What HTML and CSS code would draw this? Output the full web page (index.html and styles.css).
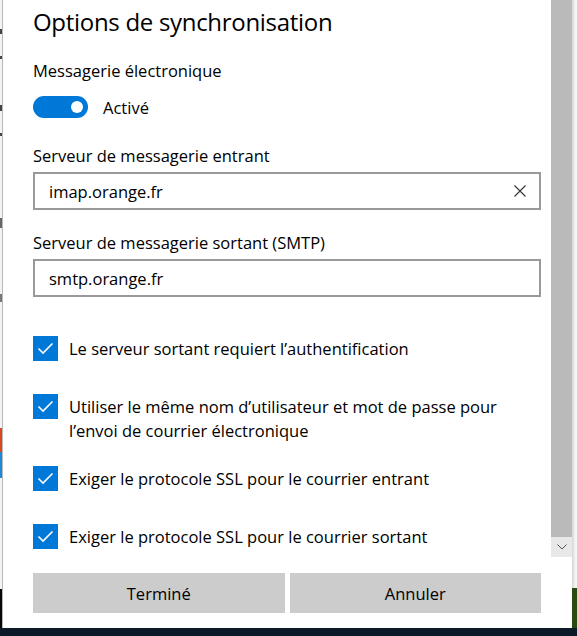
FILE: index.html
```html
<!DOCTYPE html>
<html lang="fr">
<head>
<meta charset="utf-8">
<title>Options de synchronisation</title>
<link rel="stylesheet" href="styles.css">
</head>
<body>
<div class="screen">
  <div class="behind-left">
    <div class="bl-top">
      <span class="mark mark-a"></span>
      <span class="mark mark-b"></span>
      <span class="mark mark-c"></span>
      <span class="mark mark-d"></span>
      <span class="mark mark-e"></span>
      <span class="mark mark-f"></span>
    </div>
    <div class="bl-orange"></div>
    <div class="bl-blue"></div>
    <div class="bl-fill"></div>
    <div class="bl-black"></div>
  </div>

  <section class="dialog">
    <div class="content">
      <h1 class="title">Options de synchronisation</h1>

      <div class="label label-first">Messagerie électronique</div>
      <div class="toggle-row">
        <span class="toggle"><span class="knob"></span></span>
        <span class="toggle-text">Activé</span>
      </div>

      <div class="label label-field">Serveur de messagerie entrant</div>
      <div class="field">
        <span class="field-value">imap.orange.fr</span>
        <svg class="clear" width="12" height="12" viewBox="0 0 12 12" aria-hidden="true">
          <path d="M0.5 0.5 L11.5 11.5 M11.5 0.5 L0.5 11.5" stroke="#333" stroke-width="1.1" fill="none"/>
        </svg>
      </div>

      <div class="label label-field2">Serveur de messagerie sortant (SMTP)</div>
      <div class="field">
        <span class="field-value">smtp.orange.fr</span>
      </div>

      <div class="checks">
        <div class="check">
          <span class="box"><svg width="25" height="25" viewBox="0 0 25 25"><path d="M5.5 12.5 L10 17 L19.5 7.5" stroke="#fff" stroke-width="1.6" fill="none"/></svg></span>
          <span class="check-text">Le serveur sortant requiert l’authentification</span>
        </div>
        <div class="check check-multi">
          <span class="box"><svg width="25" height="25" viewBox="0 0 25 25"><path d="M5.5 12.5 L10 17 L19.5 7.5" stroke="#fff" stroke-width="1.6" fill="none"/></svg></span>
          <span class="check-text">Utiliser le même nom d’utilisateur et mot de passe pour l’envoi de courrier électronique</span>
        </div>
        <div class="check">
          <span class="box"><svg width="25" height="25" viewBox="0 0 25 25"><path d="M5.5 12.5 L10 17 L19.5 7.5" stroke="#fff" stroke-width="1.6" fill="none"/></svg></span>
          <span class="check-text">Exiger le protocole SSL pour le courrier entrant</span>
        </div>
        <div class="check">
          <span class="box"><svg width="25" height="25" viewBox="0 0 25 25"><path d="M5.5 12.5 L10 17 L19.5 7.5" stroke="#fff" stroke-width="1.6" fill="none"/></svg></span>
          <span class="check-text">Exiger le protocole SSL pour le courrier sortant</span>
        </div>
      </div>

      <div class="buttons">
        <button class="btn">Terminé</button>
        <button class="btn">Annuler</button>
      </div>
    </div>
    <div class="scrollbar">
      <div class="thumb"></div>
      <div class="arrow">
        <svg width="10" height="6" viewBox="0 0 10 6"><path d="M0.5 0.5 L5 5 L9.5 0.5" stroke="#555" stroke-width="1" fill="none"/></svg>
      </div>
      <div class="track-rest"></div>
    </div>
  </section>

  <div class="behind-right">
    <div class="br-top"></div>
    <div class="br-green"></div>
  </div>

  <div class="taskbar"></div>
</div>
</body>
</html>
```

FILE: styles.css
```css
* { box-sizing: border-box; }

html, body {
  margin: 0;
  padding: 0;
  background: #0c1a28;
}

body {
  font-family: "Open Sans", "Noto Sans", sans-serif;
  color: #000;
}

.screen {
  width: 577px;
  height: 636px;
  display: grid;
  grid-template-columns: 3px 569px 5px;
  grid-template-rows: 628px 8px;
  overflow: hidden;
}

/* window behind, left edge */
.behind-left {
  display: flex;
  flex-direction: column;
  background: #f3f3f3;
  border-right: 1px solid #b8b8b8;
}
.bl-top {
  height: 428px;
  display: flex;
  flex-direction: column;
}
.mark {
  display: block;
  width: 2px;
  background: #444;
}
.mark-a { margin-top: 29px; height: 5px; }
.mark-b { margin-top: 22px; height: 3px; }
.mark-c { margin-top: 46px; height: 6px; }
.mark-d { margin-top: 22px; height: 3px; }
.mark-e { margin-top: 82px; height: 10px; background: #666; }
.mark-f { margin-top: 66px; height: 8px; background: #777; }
.bl-orange { height: 24px; background: #d9481e; }
.bl-blue { height: 26px; background: #1c8ad6; }
.bl-fill { flex: 1; }
.bl-black { height: 39px; background: #080808; }

/* window behind, right edge */
.behind-right {
  display: flex;
  flex-direction: column;
}
.br-top {
  height: 588px;
  background: linear-gradient(to right, #d4d4d4, #f2f2f2 60%, #f7f7f7);
}
.br-green {
  flex: 1;
  background: #2b4a12;
}

.taskbar {
  grid-column: 1 / 4;
  background: #0c1a28;
}

/* dialog */
.dialog {
  display: flex;
  background: #fff;
}

.content {
  flex: 1;
  padding: 6px 10px 15px 30px;
  display: flex;
  flex-direction: column;
}

.title {
  margin: 0;
  font-size: 24px;
  font-weight: 400;
  line-height: 32px;
  letter-spacing: -0.3px;
}

.label {
  font-size: 16.5px;
  line-height: 22px;
}
.label-first { margin-top: 22px; }
.label-field { margin-top: 27px; }
.label-field2 { margin-top: 22px; }

.toggle-row {
  margin-top: 14px;
  display: flex;
  align-items: center;
  gap: 15px;
  height: 22px;
}
.toggle {
  width: 55px;
  height: 22px;
  border-radius: 11px;
  background: #0078d7;
  display: flex;
  align-items: center;
  justify-content: flex-end;
  padding-right: 5px;
}
.knob {
  width: 12px;
  height: 12px;
  border-radius: 50%;
  background: #fff;
}
.toggle-text {
  font-size: 16.5px;
}

.field {
  margin-top: 5px;
  height: 38px;
  border: 2px solid #999;
  display: flex;
  align-items: center;
  padding: 0 13px 0 14px;
}
.field-value {
  flex: 1;
  font-size: 16.5px;
}
.clear { flex: none; }

.checks {
  margin-top: 39px;
  display: flex;
  flex-direction: column;
  gap: 33px;
}
.check {
  display: flex;
  align-items: flex-start;
  gap: 11px;
}
.check-multi { margin-bottom: -10px; }
.box {
  flex: none;
  width: 25px;
  height: 25px;
  background: #0078d7;
  display: flex;
}
.check-text {
  font-size: 16.5px;
  line-height: 24px;
  padding-top: 1px;
  max-width: 445px;
}

.buttons {
  margin-top: 24px;
  display: grid;
  grid-template-columns: 1fr 1fr;
  gap: 5px;
}
.btn {
  height: 40px;
  border: none;
  background: #cccccc;
  font-family: inherit;
  font-size: 16.5px;
  color: #000;
  padding: 0;
}

/* scrollbar */
.scrollbar {
  width: 21px;
  display: flex;
  flex-direction: column;
}
.thumb {
  height: 537px;
  background: #bababa;
}
.arrow {
  height: 20px;
  background: #e8e8e8;
  display: flex;
  align-items: center;
  justify-content: center;
}
.track-rest {
  flex: 1;
  background: #fff;
}
```
